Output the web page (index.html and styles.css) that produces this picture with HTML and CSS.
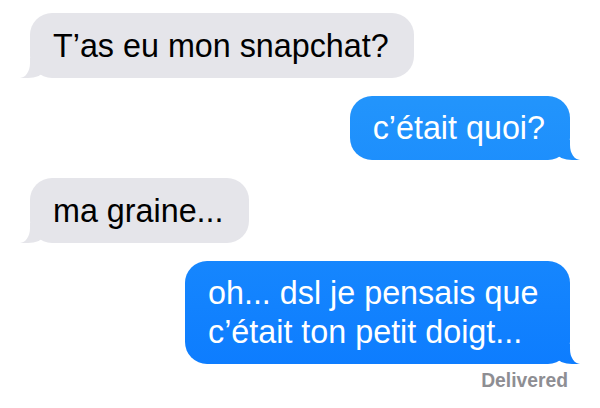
FILE: index.html
```html
<!DOCTYPE html>
<html lang="fr">
<head>
<meta charset="utf-8">
<title>Messages</title>
<link rel="stylesheet" href="styles.css">
</head>
<body>
<div class="thread">
  <div class="bubble received">T’as eu mon snapchat?</div>
  <div class="bubble sent">c’était quoi?</div>
  <div class="bubble received">ma graine...</div>
  <div class="sent-group">
    <div class="bubble sent">oh... dsl je pensais que c’était ton petit doigt...</div>
    <div class="status">Delivered</div>
  </div>
</div>
</body>
</html>
```
FILE: styles.css
```css
html, body {
  margin: 0;
  background: #fff;
}
body {
  width: 600px;
  height: 408px;
  overflow: hidden;
  font-family: "Liberation Sans", Arial, "Helvetica Neue", sans-serif;
}
.thread {
  display: flex;
  flex-direction: column;
  gap: 18px;
  padding: 13px 30px 0;
}
.bubble {
  position: relative;
  z-index: 0;
  box-sizing: border-box;
  max-width: 385px;
  font-size: 32.3px;
  line-height: 38.5px;
  padding: 13.5px 25px 12.5px 23px;
  border-radius: 22px;
}
.received {
  align-self: flex-start;
  background: #e5e5ea;
  color: #000;
}
.sent {
  align-self: flex-end;
  color: #fff;
  background: linear-gradient(#2a9dfb, #0a79ff) fixed;
}
.received::before,
.received::after,
.sent::before,
.sent::after {
  content: "";
  position: absolute;
  z-index: -1;
  bottom: 0;
}
.received::before {
  left: -10px;
  width: 22px;
  height: 20px;
  background: #e5e5ea;
  border-bottom-right-radius: 14px 6px;
}
.received::after {
  left: -10px;
  width: 10px;
  height: 26px;
  background: #fff;
  border-bottom-right-radius: 10px 15px;
}
.sent::before {
  right: -10px;
  width: 22px;
  height: 20px;
  background: linear-gradient(#2a9dfb, #0a79ff) fixed;
  border-bottom-left-radius: 14px 6px;
}
.sent::after {
  right: -10px;
  width: 10px;
  height: 26px;
  background: #fff;
  border-bottom-left-radius: 10px 15px;
}
.sent-group {
  align-self: flex-end;
  display: flex;
  flex-direction: column;
  align-items: flex-end;
}
.status {
  margin: 6.5px 2px 0 0;
  font-size: 19.3px;
  line-height: 22px;
  font-weight: 700;
  color: #8e8e93;
}
```
